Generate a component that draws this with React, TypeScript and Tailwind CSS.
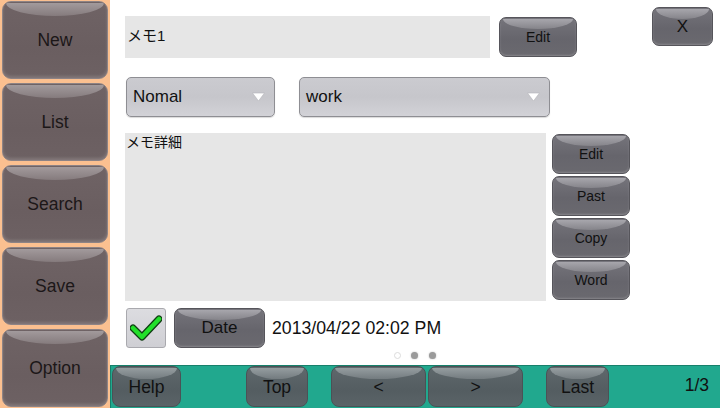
import React from "react";

const font = { fontFamily: '"Liberation Sans", "Noto Sans CJK JP", Arial, sans-serif' };

function SideBtn({ label }: { label: string }) {
  return (
    <div className="relative h-[78px] w-[106px] shrink-0 overflow-hidden rounded-[9px] border border-[#8d8385] bg-[linear-gradient(to_bottom,#6f6365_0%,#6a5e60_60%,#6d6163_100%)] shadow-[inset_0_-2px_3px_rgba(255,255,255,0.15)] flex items-center justify-center">
      <div className="absolute left-[3px] right-[3px] top-[1px] h-[13px] rounded-[50%/0_0_100%_100%] bg-[linear-gradient(to_bottom,#a29a9c,#857b7d)]" />
      <span className="relative pt-[1px] text-[17.5px] text-[#1c1718]">{label}</span>
    </div>
  );
}

function GrayBtn({ label, className, text = "text-[14px]" }: { label: string; className: string; text?: string }) {
  return (
    <div className={`relative shrink-0 overflow-hidden rounded-[7px] border border-[#56555b] bg-[linear-gradient(to_bottom,#75747b_0%,#66656c_55%,#6a696f_100%)] shadow-[inset_0_-1px_2px_rgba(255,255,255,0.2)] flex items-center justify-center ${className}`}>
      <div className="absolute left-[3px] right-[3px] top-[1px] h-[10px] rounded-[50%/0_0_100%_100%] bg-[linear-gradient(to_bottom,#a7a6ac,#85848a)]" />
      <span className={`relative text-[#111] ${text}`}>{label}</span>
    </div>
  );
}

function BarBtn({ label, className }: { label: string; className: string }) {
  return (
    <div className={`relative shrink-0 overflow-hidden rounded-[8px] border border-[#4a5256] bg-[linear-gradient(to_bottom,#5f686c_0%,#545d61_60%,#5a6367_100%)] flex items-center justify-center ${className}`}>
      <div className="absolute left-[3px] right-[3px] top-[1px] h-[11px] rounded-[50%/0_0_100%_100%] bg-[linear-gradient(to_bottom,#959da0,#737b7f)]" />
      <span className="relative text-[17.5px] leading-[20px] text-[#111]">{label}</span>
    </div>
  );
}

function Select({ label, className }: { label: string; className: string }) {
  return (
    <div className={`flex h-[40px] shrink-0 items-center justify-between rounded-[5px] border border-[#8e8e93] bg-[linear-gradient(to_bottom,#cbcbd0_0%,#c6c6cb_50%,#d2d2d7_100%)] pl-[6px] pr-[9px] shadow-[0_1px_1px_rgba(0,0,0,0.15)] ${className}`}>
      <span className="text-[17px] text-[#111]">{label}</span>
      <svg width="13" height="10" viewBox="0 0 13 10">
        <path d="M0.5 1 L12.5 1 L6.5 9 Z" fill="#ffffff" stroke="#b4b4b8" strokeWidth="0.6" />
      </svg>
    </div>
  );
}

export default function App() {
  return (
    <div className="flex h-[408px] w-[720px] overflow-hidden bg-white" style={font}>
      <div className="flex w-[110px] shrink-0 flex-col gap-[4px] bg-[#fbc090] px-[2px] pt-[1px]">
        <SideBtn label="New" />
        <SideBtn label="List" />
        <SideBtn label="Search" />
        <SideBtn label="Save" />
        <SideBtn label="Option" />
      </div>
      <div className="flex flex-1 flex-col">
        <div className="flex flex-col pl-[15px]">
          <div className="flex items-start pt-[7px]">
            <div className="mt-[9px] flex h-[42px] w-[365px] items-center bg-[#e6e6e6] pl-[2px] pb-[2px] text-[15px] text-[#111]">メモ1</div>
            <GrayBtn label="Edit" className="ml-[9px] mt-[10px] h-[40px] w-[78px]" />
            <GrayBtn label="X" text="text-[17px]" className="ml-[75px] h-[39px] w-[61px]" />
          </div>
          <div className="mt-[19px] ml-[1px] flex">
            <Select label="Nomal" className="w-[149px]" />
            <Select label="work" className="ml-[24px] w-[251px]" />
          </div>
          <div className="mt-[16px] flex">
            <div className="h-[168px] w-[421px] bg-[#e6e6e6] pl-[1px] text-[14px] leading-[18px] text-[#111]">メモ詳細</div>
            <div className="ml-[6px] mt-[1px] flex flex-col gap-[2px]">
              <GrayBtn label="Edit" className="h-[40px] w-[78px]" />
              <GrayBtn label="Past" className="h-[40px] w-[78px]" />
              <GrayBtn label="Copy" className="h-[40px] w-[78px]" />
              <GrayBtn label="Word" className="h-[40px] w-[78px]" />
            </div>
          </div>
          <div className="mt-[7px] flex items-center">
            <div className="ml-[1px] flex h-[40px] w-[40px] items-center justify-center rounded-[3px] border border-[#a9a9ae] bg-[linear-gradient(to_bottom,#dcdce0,#cfcfd4)]">
              <svg width="32" height="26" viewBox="0 0 32 26">
                <path d="M3 13 L12 22 L29 4" fill="none" stroke="#0f3d12" strokeWidth="7" strokeLinecap="round" strokeLinejoin="round" />
                <path d="M3 13 L12 22 L29 4" fill="none" stroke="#22e02a" strokeWidth="4.5" strokeLinecap="round" strokeLinejoin="round" />
              </svg>
            </div>
            <GrayBtn label="Date" text="text-[17px]" className="ml-[8px] h-[40px] w-[91px]" />
            <span className="ml-[7px] text-[17.7px] text-[#111]">2013/04/22 02:02 PM</span>
          </div>
          <div className="mt-[4px] flex h-[7px] pl-[269px]">
            <div className="h-[7px] w-[7px] rounded-full border border-[#dcdcdc] bg-white" />
            <div className="ml-[10px] h-[7px] w-[7px] rounded-full bg-[#9a9a9a] shadow-[0_0_2px_#bbb]" />
            <div className="ml-[11px] h-[7px] w-[7px] rounded-full bg-[#9a9a9a] shadow-[0_0_2px_#bbb]" />
          </div>
        </div>
        <div className="mt-auto flex h-[43px] items-start border-l border-t border-[#17806b] bg-[#21a88e] pl-[1px]">
          <BarBtn label="Help" className="h-[41px] w-[69px]" />
          <BarBtn label="Top" className="ml-[65px] h-[41px] w-[62px]" />
          <BarBtn label="<" className="ml-[23px] h-[41px] w-[95px]" />
          <BarBtn label=">" className="ml-[2px] h-[41px] w-[95px]" />
          <BarBtn label="Last" className="ml-[23px] h-[41px] w-[63px]" />
          <span className="ml-auto mr-[11px] pt-[9px] text-[17.5px] leading-[20px] text-[#111]">1/3</span>
        </div>
      </div>
    </div>
  );
}
